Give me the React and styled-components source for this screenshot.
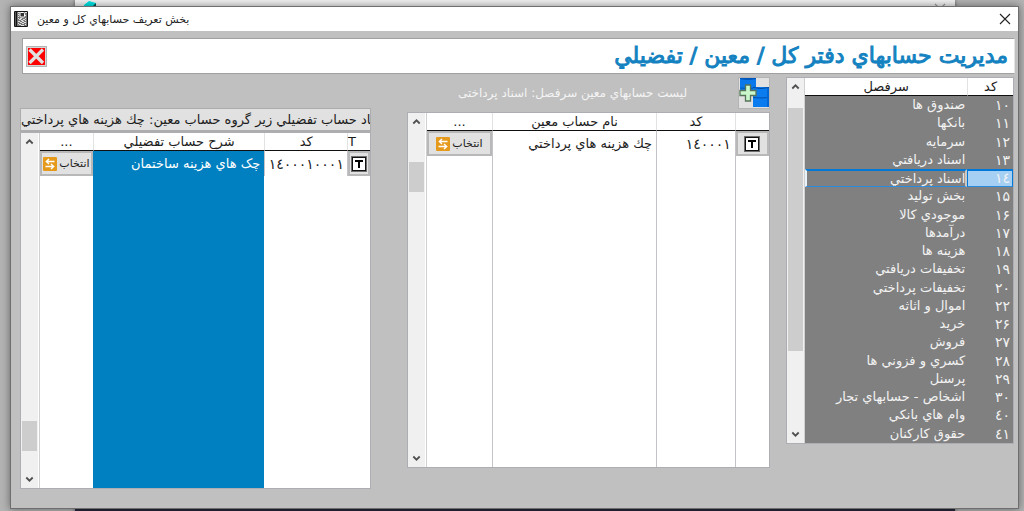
import React from 'react';
import styled, { createGlobalStyle, css } from 'styled-components';

const GlobalStyle = createGlobalStyle`
  * {
    box-sizing: border-box;
  }

  body {
    margin: 0;
    background: #b3b3b3;
    font-family: 'DejaVu Sans', Tahoma, sans-serif;
    font-size: 13px;
    color: #1c1c1c;
  }

  button {
    font: inherit;
    color: inherit;
    padding: 0;
  }
`;

/* ---------- desktop and windows ---------- */

const Desktop = styled.div`
  position: relative;
  min-height: 100vh;
  padding: 6px 5px 3px 10px;
  display: flex;
  overflow: hidden;
`;

const BackWindow = styled.div`
  position: absolute;
  inset: 0 69px 0 75px;
  background: linear-gradient(#f0f0f0 50%, #25273a 50%);
  box-shadow: 0 0 4px rgba(0, 0, 0, 0.5);
  display: flex;
  align-items: flex-start;
  justify-content: space-between;
  padding: 0 9px;
`;

const BackClose = styled.div`
  padding-top: 3px;
`;

const Dialog = styled.div`
  position: relative;
  flex: 1;
  min-width: 0;
  display: flex;
  flex-direction: column;
  background: #c0c0c0;
  border: 1px solid #6e6e6e;
  box-shadow: 0 0 8px rgba(0, 0, 0, 0.45);
`;

const TitleBar = styled.div`
  display: flex;
  align-items: center;
  gap: 9px;
  height: 24px;
  padding: 0 7px 0 3px;
  background: #ffffff;
`;

const WindowTitle = styled.div`
  flex: 1;
  font-size: 11px;
`;

const CloseButton = styled.button`
  display: flex;
  border: none;
  background: none;
`;

const Banner = styled.div`
  display: flex;
  align-items: center;
  justify-content: space-between;
  height: 36px;
  margin: 7px 3px 0 11px;
  padding: 0 6px 0 3px;
  background: #ffffff;
  border: 1px solid #a0a0a0;
  border-right-color: #e3e3e3;
`;

const BannerTitle = styled.h1`
  margin: 0;
  font-size: 22px;
  font-weight: normal;
  line-height: 32px;
  color: #1482c0;
  -webkit-text-stroke: 1px #1482c0;
  paint-order: stroke;
`;

const ExitButton = styled.button`
  display: flex;
  padding: 1px;
  border: 1px solid #b4b4b4;
  background: #d6d6d6;
`;

/* ---------- panels ---------- */

const Panels = styled.div`
  display: grid;
  grid-template-columns: 228fr 383fr 351fr;
  align-items: start;
  gap: 16px;
  padding: 3px 4px 19px 9px;
`;

const Panel = styled.section`
  min-width: 0;
  padding-top: ${(p) => p.$top || 0}px;
  padding-left: ${(p) => p.$indent || 0}px;
`;

const PanelHead = styled.div`
  display: flex;
  align-items: flex-start;
  height: 35px;
`;

const PanelLabel = styled.div`
  flex: 1;
  font-size: 12px;
  line-height: 32px;
  color: #f4f4f4;
  text-align: center;
`;

const AddButton = styled.button`
  display: flex;
  border: 1px solid #b4b4b4;
  background: #e1e1e1;
`;

const CreateButton = styled.button`
  display: flex;
  justify-content: flex-end;
  align-items: center;
  width: 100%;
  height: 24px;
  overflow: hidden;
  border: 1px solid #adadad;
  border-bottom-width: 2px;
  background: #e1e1e1;
  white-space: nowrap;
`;

const GridBox = styled.div`
  display: flex;
  height: ${(p) => p.$height}px;
  overflow: hidden;
  border: 1px solid #adadb4;
  background: #ffffff;
`;

/* ---------- scroll bar ---------- */

const Scroll = styled.div`
  display: flex;
  flex-direction: column;
  flex: none;
  width: 17px;
  background: #f0f0f0;
`;

const ScrollArrow = styled.button`
  display: flex;
  justify-content: center;
  align-items: center;
  height: 17px;
  border: none;
  background: none;
`;

const ScrollTrack = styled.div`
  flex: 1;
  padding: ${(p) => p.$offset}px 1px 0;
`;

const ScrollThumb = styled.div`
  height: ${(p) => p.$size}px;
  background: #cdcdcd;
`;

/* ---------- table ---------- */

const Table = styled.table`
  flex: 1;
  width: 100%;
  min-width: 0;
  height: 100%;
  table-layout: fixed;
  border-collapse: separate;
  border-spacing: 0;
  margin-left: ${(p) => (p.$dark ? 0 : 1)}px;
  border-left: 1px solid #d0d0d0;

  ${(p) =>
    p.$dark &&
    css`
      color: #f2f2f2;

      tbody {
        background: #808080;
      }
    `}
`;

const Th = styled.th`
  height: 18px;
  padding: 0;
  background: #ffffff;
  border-bottom: 1px solid #101010;
  border-left: 1px solid #e2e2e2;
  color: #1c1c1c;
  font-weight: normal;
  line-height: 16px;
  text-align: ${(p) => p.$align || 'center'};

  &:last-child {
    border-left: none;
  }
`;

const Td = styled.td`
  height: ${(p) => p.$height || 'auto'};
  padding: 0 ${(p) => p.$pad || 0}px 0 0;
  background: ${(p) => p.$fill || 'transparent'};
  color: ${(p) => (p.$fill ? '#ffffff' : 'inherit')};
  border-left: ${(p) => (p.$line ? '1px solid #c4c4c8' : 'none')};
  line-height: 16px;
  white-space: nowrap;
  text-align: right;
`;

const CodeTd = styled(Td)`
  font-size: 14px;
`;

const SelectedRow = styled.tr`
  td {
    border-top: 2px solid #0078d7;
    border-bottom: 1px solid #2a8ce0;
    line-height: 13px;
  }

  td:first-child {
    background: #a6d0f3;
    border-right: 1px solid #0078d7;
    border-left: 1px solid #0078d7;
    padding-right: 2px;
  }

  td:last-child {
    border-right: 2px solid #c9c9c9;
    border-left: 2px solid #e8f3fc;
    padding-right: 0;
  }
`;

const CellButton = styled.button`
  display: flex;
  justify-content: center;
  align-items: center;
  gap: 2px;
  width: 100%;
  height: 25px;
  overflow: hidden;
  border: 2px solid #b8b8b8;
  background: #e1e1e1;
  font-size: 11px;
`;

/* ---------- icons ---------- */

const Chevron = ({ down }) => (
  <svg width="9" height="7" viewBox="0 0 9 7" aria-hidden="true">
    <path
      d={down ? 'M1.3 1.5 4.5 4.7 7.7 1.5' : 'M1.3 5.5 4.5 2.3 7.7 5.5'}
      fill="none"
      stroke="#505050"
      strokeWidth="1.8"
    />
  </svg>
);

const CloseIcon = ({ color = '#222' }) => (
  <svg width="12" height="12" viewBox="0 0 12 12" aria-hidden="true">
    <path d="M1 1 11 11M11 1 1 11" stroke={color} strokeWidth="1.1" />
  </svg>
);

const BookIcon = () => (
  <svg width="14" height="16" viewBox="0 0 14 16" aria-hidden="true">
    <rect x="0" y="0" width="14" height="16" rx="1" fill="#161616" />
    <rect x="3" y="1" width="10" height="14" fill="#777" />
    <path
      d="M4 1.500h2M11 1.500h2M4 3.500h1M11 4.500h1M4 5.500h1M6 7.500h2M4 7.500h1M11 7.500h1M5 8.500h2M9 8.500h2M7 9.500h2M11 9.500h1M4 10.500h2M8 10.500h2M6 11.500h2M10 11.500h2M4 12.500h1M8 12.500h2M5 13.500h2M11 13.500h1M7 14.500h3"
      stroke="#dedede"
      strokeWidth="1"
    />
    <path d="M1 2h1M1 4h1M1 6h1M1 8h1M1 10h1M1 12h1M1 14h1" stroke="#999" />
    <rect x="6" y="1.500" width="4.500" height="4.500" rx="1" fill="#333" stroke="#fff" />
  </svg>
);

const ExitIcon = () => (
  <svg width="17" height="17" viewBox="0 0 17 17" aria-hidden="true">
    <rect width="17" height="17" fill="#ff0000" />
    <path d="M1.500 1.500 15 15M15 1.500 1.500 15" stroke="#e0e0e0" strokeWidth="3.2" />
  </svg>
);

const AddServerIcon = () => (
  <svg width="30" height="30" viewBox="0 0 30 30" aria-hidden="true">
    <path d="M1 0h16v17H1z" fill="#0a78ea" />
    <path d="M1 0h16v1q-8 2-16 0z" fill="#0055b8" />
    <path d="M1 10q8 1 16 0" fill="none" stroke="#0058ba" />
    <path d="M14 9h16v20H14z" fill="#0a7cf0" />
    <path d="M14 9.500q8 2 16 0" fill="none" stroke="#004a9c" />
    <path d="M14 19.500q8 1 16 0" fill="none" stroke="#0050ac" />
    <path d="M28 10h2v19h-2z" fill="#0066d4" />
    <path
      d="M6.500 7h5v5.500h5.500v5h-5.500v5.500h-5v-5.500h-5.500v-5h5.500z"
      fill="#c9f7cb"
      stroke="#55735a"
      strokeWidth="1.3"
    />
  </svg>
);

const SwapIcon = () => (
  <svg width="14" height="14" viewBox="0 0 14 14" aria-hidden="true">
    <rect width="14" height="14" rx="1" fill="#e69a1c" />
    <path
      d="M11.500 4.500H3.500M6 2 3.300 4.500 6 7M2.500 9.500h8M8 7l2.700 2.500L8 12"
      fill="none"
      stroke="#fff"
      strokeWidth="1.4"
    />
  </svg>
);

const TextIcon = () => (
  <svg width="16" height="16" viewBox="0 0 16 16" aria-hidden="true">
    <rect x="1" y="1" width="14" height="14" fill="#fff" stroke="#111" strokeWidth="2" />
    <rect
      x="0.500"
      y="0.500"
      width="15"
      height="15"
      fill="none"
      stroke="#ccc"
      strokeDasharray="1 1"
    />
    <path d="M4 5h8M8 5v7" stroke="#000" strokeWidth="2" />
  </svg>
);

const CyanIcon = () => (
  <svg width="14" height="7" viewBox="0 0 14 7" aria-hidden="true">
    <path d="M0 5 5 1l7 2v4H0z" fill="#00e5e5" />
    <path d="M12 3v3H9z" fill="#0a4a4a" />
  </svg>
);

/* ---------- data ---------- */

const headings = [
  ['۱۰', 'صندوق ها'],
  ['۱۱', 'بانكها'],
  ['۱۲', 'سرمايه'],
  ['۱۳', 'اسناد دريافتي'],
  ['۱٤', 'اسناد پرداختي'],
  ['۱۵', 'بخش توليد'],
  ['۱۶', 'موجودي كالا'],
  ['۱۷', 'درآمدها'],
  ['۱۸', 'هزينه ها'],
  ['۱۹', 'تخفيفات دريافتي'],
  ['۲۰', 'تخفيفات پرداختي'],
  ['۲۲', 'اموال و اثاثه'],
  ['۲۶', 'خريد'],
  ['۲۷', 'فروش'],
  ['۲۸', 'كسري و فزوني ها'],
  ['۲۹', 'پرسنل'],
  ['۳۰', 'اشخاص - حسابهاي تجار'],
  ['٤۰', 'وام هاي بانكي'],
  ['٤۱', 'حقوق كاركنان'],
];

const SELECTED_CODE = '۱٤';

const ScrollBar = ({ offset, size }) => (
  <Scroll>
    <ScrollArrow aria-label="بالا">
      <Chevron />
    </ScrollArrow>
    <ScrollTrack $offset={offset}>
      <ScrollThumb $size={size} />
    </ScrollTrack>
    <ScrollArrow aria-label="پايين">
      <Chevron down />
    </ScrollArrow>
  </Scroll>
);

const Col = styled.col`
  width: ${(p) => p.$width || 'auto'};
`;

const SelectButton = () => (
  <CellButton>
    انتخاب
    <SwapIcon />
  </CellButton>
);

const HeadingsPanel = () => (
  <Panel>
    <GridBox $height={367}>
      <Table $dark>
        <colgroup>
          <Col $width="22%" />
          <Col />
        </colgroup>
        <thead>
          <tr>
            <Th>كد</Th>
            <Th>سرفصل</Th>
          </tr>
        </thead>
        <tbody>
          {headings.map(([code, name]) => {
            const Row = code === SELECTED_CODE ? SelectedRow : 'tr';
            return (
              <Row key={code}>
                <CodeTd $pad={3}>{code}</CodeTd>
                <Td $pad={2}>{name}</Td>
              </Row>
            );
          })}
        </tbody>
      </Table>
      <ScrollBar offset={13} size={243} />
    </GridBox>
  </Panel>
);

const LedgerPanel = () => (
  <Panel $indent={20}>
    <PanelHead>
      <AddButton aria-label="افزودن">
        <AddServerIcon />
      </AddButton>
      <PanelLabel>ليست حسابهاي معين سرفصل: اسناد پرداختی</PanelLabel>
    </PanelHead>
    <GridBox $height={356}>
      <Table>
        <colgroup>
          <Col $width="10%" />
          <Col $width="23%" />
          <Col />
          <Col $width="19%" />
        </colgroup>
        <thead>
          <tr>
            <Th />
            <Th>كد</Th>
            <Th>نام حساب معين</Th>
            <Th>...</Th>
          </tr>
        </thead>
        <tbody>
          <tr>
            <Td $line $height="25px">
              <CellButton aria-label="متن">
                <TextIcon />
              </CellButton>
            </Td>
            <CodeTd $line $pad={4}>۱٤۰۰۰۱</CodeTd>
            <Td $line $pad={4}>چك هزينه هاي پرداختي</Td>
            <Td>
              <SelectButton />
            </Td>
          </tr>
          <tr>
            <Td $line />
            <Td $line />
            <Td $line />
            <Td />
          </tr>
        </tbody>
      </Table>
      <ScrollBar offset={32} size={30} />
    </GridBox>
  </Panel>
);

const DetailPanel = () => (
  <Panel $top={31}>
    <CreateButton>
      <span>ايجاد حساب تفضيلي زير گروه حساب معين: چك هزينه هاي پرداختي</span>
    </CreateButton>
    <GridBox $height={357}>
      <Table>
        <colgroup>
          <Col $width="7%" />
          <Col $width="25%" />
          <Col />
          <Col $width="16%" />
        </colgroup>
        <thead>
          <tr>
            <Th $align="left">T</Th>
            <Th>كد</Th>
            <Th>شرح حساب تفضيلي</Th>
            <Th>...</Th>
          </tr>
        </thead>
        <tbody>
          <tr>
            <Td $line $height="25px">
              <CellButton aria-label="متن">
                <TextIcon />
              </CellButton>
            </Td>
            <CodeTd $line $pad={3}>۱٤۰۰۰۱۰۰۰۱</CodeTd>
            <Td $pad={4} $fill="#0080c0">چک هاي هزينه ساختمان</Td>
            <Td>
              <SelectButton />
            </Td>
          </tr>
          <tr>
            <Td />
            <Td />
            <Td $fill="#0080c0" />
            <Td />
          </tr>
        </tbody>
      </Table>
      <ScrollBar offset={271} size={30} />
    </GridBox>
  </Panel>
);

const App = () => {
  return (
    <>
      <GlobalStyle />
      <Desktop>
        <BackWindow>
          <CyanIcon />
          <BackClose>
            <CloseIcon color="#999" />
          </BackClose>
        </BackWindow>
        <Dialog>
          <TitleBar>
            <BookIcon />
            <WindowTitle>بخش تعريف حسابهاي كل و معين</WindowTitle>
            <CloseButton aria-label="بستن">
              <CloseIcon />
            </CloseButton>
          </TitleBar>
          <Banner>
            <ExitButton aria-label="خروج">
              <ExitIcon />
            </ExitButton>
            <BannerTitle dir="rtl">مديريت حسابهاي دفتر كل / معين / تفضيلي</BannerTitle>
          </Banner>
          <Panels dir="rtl">
            <HeadingsPanel />
            <LedgerPanel />
            <DetailPanel />
          </Panels>
        </Dialog>
      </Desktop>
    </>
  );
};

export default App;
